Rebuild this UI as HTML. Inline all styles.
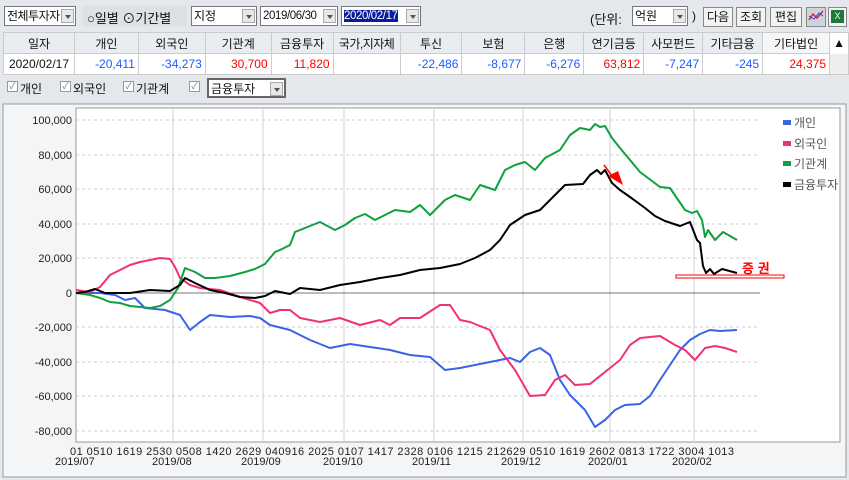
<!DOCTYPE html>
<html><head><meta charset="utf-8"><style>
*{margin:0;padding:0;box-sizing:border-box}
body{width:849px;height:480px;background:#e4e7ec;font-family:"Liberation Sans","Noto Sans CJK KR",sans-serif;font-size:12px;color:#111;position:relative;overflow:hidden}
.a{position:absolute}
.box{position:absolute;background:#fff;border:1px solid #777;height:20px;line-height:18px;padding-left:2px;font-size:12px;white-space:nowrap;overflow:hidden}
.dd{position:absolute;right:1px;top:2px;width:13px;height:14px;background:#e8e8e8;border:1px solid #aaa}
.dd:after{content:"";position:absolute;left:3px;top:5px;border:3px solid transparent;border-top:4px solid #555}
.btn{position:absolute;top:7px;height:20px;background:#f3f3f3;border:1px solid #888;line-height:18px;text-align:center;font-size:12px}
table{position:absolute;left:3px;top:32px;border-collapse:collapse;font-size:12px}
td{border:1px solid #ccc;height:21px;padding:0 3px;white-space:nowrap}
tr.h td{background:#e9ecf1;text-align:center}
tr.d td{background:#fff;text-align:right}
.b{color:#1e5cff}.r{color:#f00}
.cb{position:absolute;top:81px;width:11px;height:11px;border:1px solid #999;background:#fff;font-size:9px;line-height:9px;color:#777;text-align:center}
</style></head><body>
<div class="box" style="left:4px;top:6px;width:72px;letter-spacing:-0.5px">전체투자자<div class="dd"></div></div>
<div class="a" style="left:83px;top:6px;width:104px;height:20px;background:#dde0e5"></div>
<div class="a" style="left:87px;top:8px;font-size:13px">○일별 ⊙기간별</div>
<div class="box" style="left:191px;top:6px;width:66px">지정<div class="dd"></div></div>
<div class="box" style="left:260px;top:6px;width:78px;font-size:11.5px;letter-spacing:-0.4px">2019/06/30<div class="dd"></div></div>
<div class="box" style="left:341px;top:6px;width:80px;padding-left:2px;font-size:11.5px;letter-spacing:-0.4px"><span style="background:#0a1c9c;color:#fff">2020/02/17</span><div class="dd"></div></div>
<div class="a" style="left:590px;top:9px;font-size:13px">(단위:</div>
<div class="box" style="left:632px;top:6px;width:56px">억원<div class="dd"></div></div>
<div class="a" style="left:692px;top:9px">)</div>
<div class="btn" style="left:703px;width:30px">다음</div>
<div class="btn" style="left:736px;width:30px">조회</div>
<div class="btn" style="left:770px;width:32px">편집</div>
<div class="btn" style="left:806px;width:20px;background:#cfd4dc"><svg width="18" height="16"><polyline points="2,12 6,6 10,10 16,3" fill="none" stroke="#e22" stroke-width="1.5"/><polyline points="2,8 7,11 12,5 16,8" fill="none" stroke="#33f" stroke-width="1"/></svg></div>
<div class="btn" style="left:828px;width:19px"><div style="margin:2px auto;width:13px;height:13px;background:#1d7a3a;color:#fff;font-size:9px;line-height:13px">X</div></div>
<table>
<tr class="h"><td style="width:71px">일자</td><td style="width:64px">개인</td><td style="width:67px">외국인</td><td style="width:66px">기관계</td><td style="width:62px">금융투자</td><td style="width:67px;letter-spacing:-0.5px">국가,지자체</td><td style="width:62px">투신</td><td style="width:63px">보험</td><td style="width:59px">은행</td><td style="width:60px">연기금등</td><td style="width:59px">사모펀드</td><td style="width:60px">기타금융</td><td style="width:67px;background:#f5f6f8">기타법인</td><td style="width:17px;background:#fff;border-bottom:none">▲</td></tr>
<tr class="d"><td style="text-align:center">2020/02/17</td><td class="b">-20,411</td><td class="b">-34,273</td><td class="r">30,700</td><td class="r">11,820</td><td></td><td class="b">-22,486</td><td class="b">-8,677</td><td class="b">-6,276</td><td class="r">63,812</td><td class="b">-7,247</td><td class="b">-245</td><td class="r">24,375</td><td style="background:#eee;border-top:none"></td></tr>
</table>
<div class="cb" style="left:7px">✓</div><div class="a" style="left:20px;top:80px">개인</div>
<div class="cb" style="left:60px">✓</div><div class="a" style="left:73px;top:80px">외국인</div>
<div class="cb" style="left:123px">✓</div><div class="a" style="left:136px;top:80px">기관계</div>
<div class="cb" style="left:189px">✓</div>
<div class="box" style="left:207px;top:78px;width:79px;border:2px solid #666">금융투자<div class="dd"></div></div>
<svg class="a" style="left:0;top:100px" width="849" height="380" viewBox="0 100 849 380">
<rect x="3" y="104" width="843" height="373" fill="#f4f5f7" stroke="#999"/>
<rect x="76" y="108" width="764" height="334" fill="#fff" stroke="#999"/>
<g stroke="#ccc" stroke-dasharray="3,3">
<line x1="76" x2="760" y1="120" y2="120"/><line x1="76" x2="760" y1="155" y2="155"/><line x1="76" x2="760" y1="189" y2="189"/><line x1="76" x2="760" y1="224" y2="224"/><line x1="76" x2="760" y1="258" y2="258"/><line x1="76" x2="760" y1="327" y2="327"/><line x1="76" x2="760" y1="362" y2="362"/><line x1="76" x2="760" y1="396" y2="396"/><line x1="76" x2="760" y1="431" y2="431"/></g>
<g stroke="#d0d0d0"><line x1="173" x2="173" y1="108" y2="442"/><line x1="263" x2="263" y1="108" y2="442"/><line x1="344" x2="344" y1="108" y2="442"/><line x1="434" x2="434" y1="108" y2="442"/><line x1="523" x2="523" y1="108" y2="442"/><line x1="610" x2="610" y1="108" y2="442"/><line x1="694" x2="694" y1="108" y2="442"/></g>
<line x1="76" x2="760" y1="293" y2="293" stroke="#777"/>
<g font-size="11" text-anchor="end" fill="#222"><text x="72" y="124">100,000</text><text x="72" y="159">80,000</text><text x="72" y="193">60,000</text><text x="72" y="228">40,000</text><text x="72" y="262">20,000</text><text x="72" y="297">0</text><text x="72" y="331">-20,000</text><text x="72" y="366">-40,000</text><text x="72" y="400">-60,000</text><text x="72" y="435">-80,000</text></g>
<g font-size="11" fill="#222"><text x="70" y="455" textLength="664" lengthAdjust="spacing">01 0510 1619 2530 0508 1420 2629 040916 2025 0107 1417 2328 0106 1215 212629 0510 1619 2602 0813 1722 3004 1013</text>
<text x="55" y="465">2019/07</text><text x="152" y="465">2019/08</text><text x="241" y="465">2019/09</text><text x="323" y="465">2019/10</text><text x="412" y="465">2019/11</text><text x="501" y="465">2019/12</text><text x="588" y="465">2020/01</text><text x="672" y="465">2020/02</text></g>
<g fill="none" stroke-width="2" stroke-linejoin="round">
<polyline stroke="#3b63e6" points="76,293 100,293 115,295 125,300 135,298 145,308 165,310 180,315 190,330 200,322 210,315 230,317 250,316 260,318 270,325 290,330 310,340 330,348 350,344 370,347 390,350 410,355 430,357 445,370 460,368 475,365 490,362 510,358 520,362 530,352 540,348 550,355 560,380 570,395 585,410 595,427 605,420 615,410 625,405 640,404 650,396 660,380 670,365 680,350 690,340 700,334 710,330 720,331 737,330"/>
<polyline stroke="#f0307a" points="76,290 90,292 100,287 110,275 120,270 130,265 140,262 150,260 160,258 170,259 175,267 180,278 190,285 200,288 220,290 240,297 260,303 265,308 270,313 280,310 290,310 300,318 320,322 340,318 360,325 380,320 390,325 400,318 420,318 440,305 450,305 460,320 470,322 490,330 500,350 515,370 530,396 545,395 555,380 565,375 575,385 590,384 605,372 620,360 630,345 640,338 660,336 675,345 685,350 695,360 705,348 715,346 725,348 737,352"/>
<polyline stroke="#10a040" points="76,293 90,295 100,298 110,302 120,303 130,306 150,308 160,306 170,300 178,288 185,268 195,272 205,278 215,278 230,276 245,272 255,269 265,264 275,252 280,250 290,245 295,232 305,228 320,222 335,230 345,225 355,218 365,214 375,220 385,215 395,210 410,212 420,205 430,215 445,200 455,195 470,200 480,185 495,190 505,170 515,165 525,162 535,170 545,158 560,150 570,135 580,128 590,130 595,124 600,127 605,126 612,138 620,148 640,172 660,187 670,188 685,210 692,213 697,211 702,220 705,237 708,230 715,240 723,232 737,240"/>
<polyline stroke="#000" points="76,293 85,292 95,289 105,293 130,293 150,290 170,291 180,285 185,278 195,283 210,290 225,293 240,297 255,298 265,296 275,291 290,294 300,288 320,290 340,285 360,282 380,278 400,275 420,270 440,268 460,264 475,258 490,250 500,240 510,225 525,215 540,210 555,195 565,185 583,184 590,175 597,170 601,174 605,170 612,183 620,190 630,197 645,208 655,216 665,221 680,226 690,222 697,240 700,243 703,266 706,273 710,269 714,274 722,269 737,273"/>
</g>
<path d="M604,165 L612,176" stroke="#f00" stroke-width="1.5"/><polygon points="608,176 618,171 623,185" fill="#f00"/>
<rect x="676" y="275" width="108" height="3" fill="#fff" stroke="#f00" stroke-width="1"/>
<text x="742" y="273" font-size="13" font-weight="bold" fill="#f00">증 권</text>
<g font-size="12" fill="#555"><rect x="783" y="120" width="8" height="5" fill="#3b63e6"/><text x="794" y="127">개인</text>
<rect x="783" y="141" width="8" height="5" fill="#f0307a"/><text x="794" y="148">외국인</text>
<rect x="783" y="161" width="8" height="5" fill="#10a040"/><text x="794" y="168">기관계</text>
<rect x="783" y="182" width="8" height="5" fill="#000"/><text x="794" y="189">금융투자</text></g>
</svg>
</body></html>
